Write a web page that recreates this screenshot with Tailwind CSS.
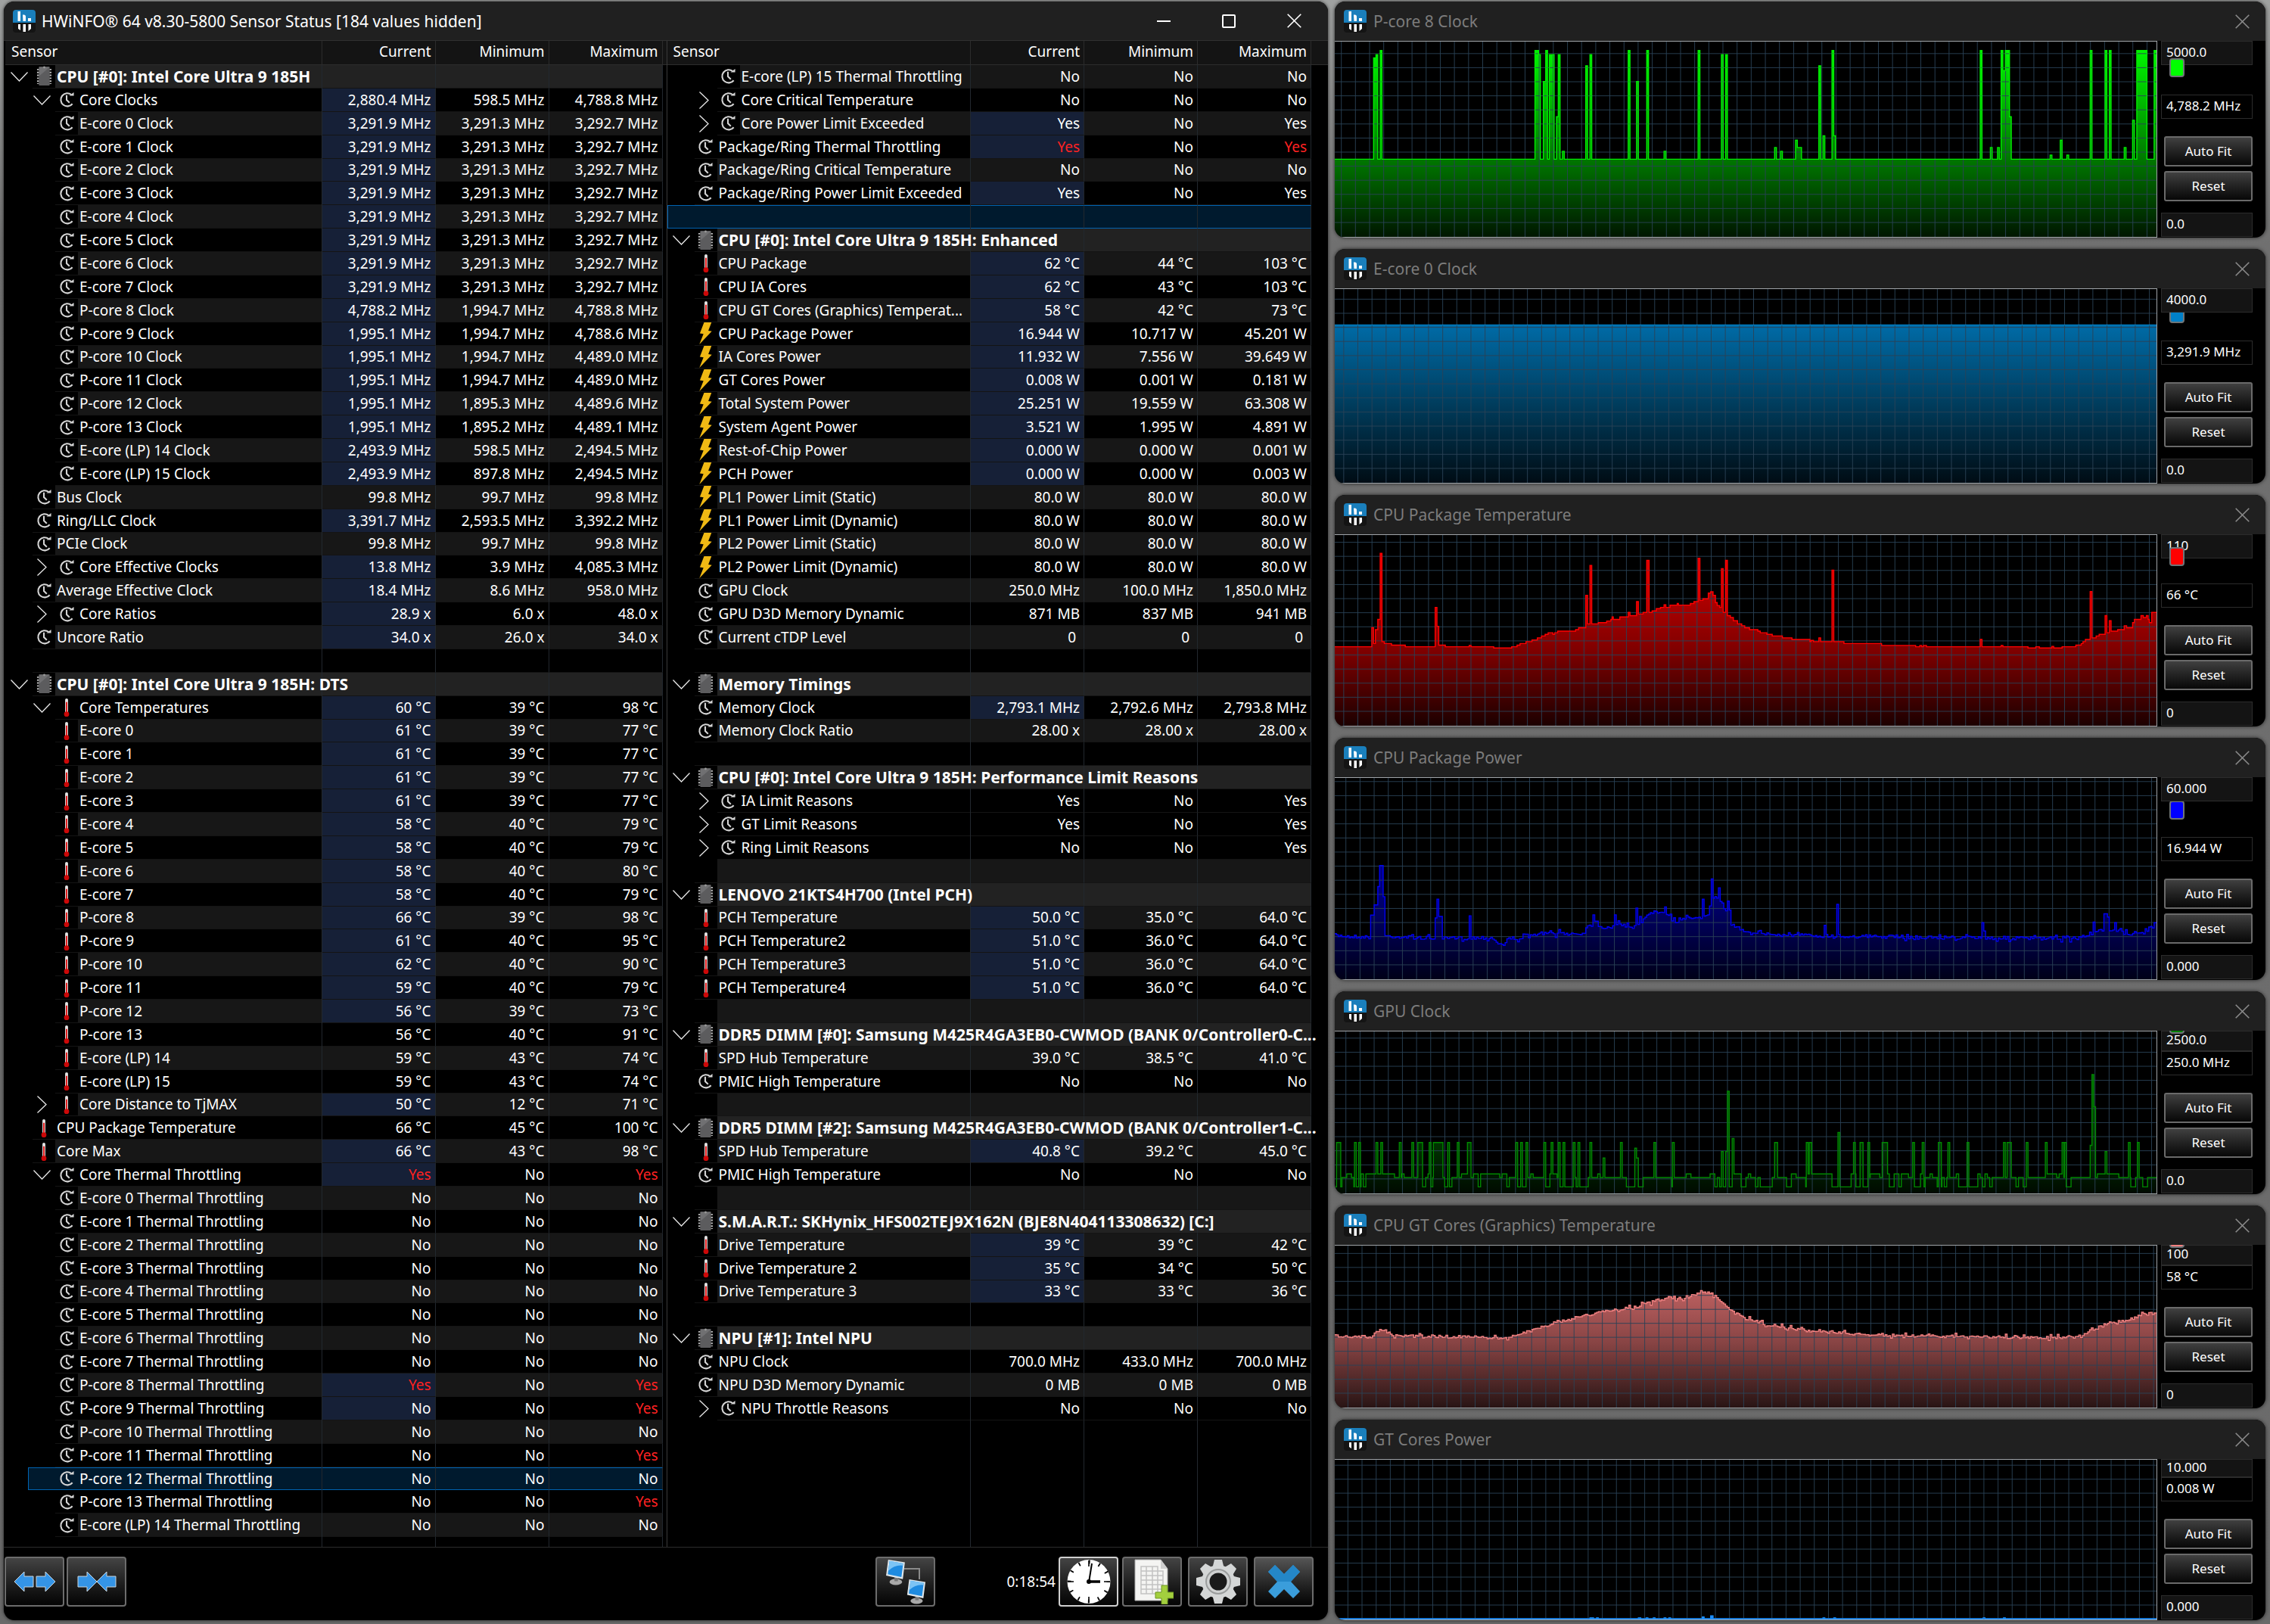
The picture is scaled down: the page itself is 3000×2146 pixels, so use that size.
<!DOCTYPE html>
<html lang="en">
<head>
<meta charset="utf-8">
<title>HWiNFO64 Sensor Status</title>
<script src="https://cdn.jsdelivr.net/npm/@tailwindcss/browser@4"></script>
</head>
<body class="h-screen bg-[linear-gradient(#a0a2a1,#707070_15%,#6a6a6a)] font-['Noto_Sans',sans-serif] text-white">
<!-- shared icons -->
<svg class="hidden" aria-hidden="true">
  <symbol id="app" viewBox="0 0 30 30">
    <rect width="30" height="30" rx="4" fill="#141414"/>
    <path d="M4 0h22a4 4 0 0 1 4 4v13H0V4a4 4 0 0 1 4-4z" fill="#1a7fbc"/>
    <path d="M6.500 2h3.500v13h-3.500zM13 6.500h1.500q2.500 0 2.500 2.500v6h-3.500zM20 11h4v4h-4zM7 19h3v8l-3-2zM13.500 19h3.500v10h-3.500zM20.500 19h3.500v6l-3.500 3z" fill="#fff"/>
  </symbol>
  <symbol id="clock" viewBox="0 0 22 22">
    <path d="M17 4.200A9 9 0 1 0 18.500 17" fill="none" stroke="#d4d4d4" stroke-width="2.200"/>
    <path d="M14 5.800h6.500V1z" fill="#d4d4d4"/>
    <path d="M10.500 5v6.500l4 4" fill="none" stroke="#d4d4d4" stroke-width="2.200"/>
  </symbol>
  <symbol id="chip" viewBox="0 0 22 28">
    <path d="M2.500 4v21M19.500 4v21" stroke="#b8b8b8" stroke-width="3" stroke-dasharray="2 2"/>
    <rect x="3.500" y="1" width="15" height="26" rx="1" fill="#5c5c5e"/>
    <path d="M4 14V2h14z" fill="#707072"/>
    <circle cx="11" cy="2" r="1.500" fill="#999"/>
  </symbol>
  <symbol id="temp" viewBox="0 0 10 28">
    <rect x="3" y="2" width="4" height="22" rx="2" fill="#e4e4e4"/>
    <rect x="4" y="7" width="2" height="17" fill="#e01818"/>
    <circle cx="5" cy="23.500" r="3.500" fill="#cc0808"/>
  </symbol>
  <symbol id="bolt" viewBox="0 0 17 30" preserveAspectRatio="none">
    <path d="M6.500 0h9.800l-4.200 11.500 4.600.7L.3 30l5.400-14.200-4.800-.8z" fill="#f0b914"/>
  </symbol>
  <symbol id="down" viewBox="0 0 23 13"><path d="M.5.500l11 11.500 11-11.500" fill="none" stroke="#e8e8e8" stroke-width="1.300"/></symbol>
  <symbol id="right" viewBox="0 0 13 23"><path d="M.5.500l11.500 11-11.500 11" fill="none" stroke="#e8e8e8" stroke-width="1.300"/></symbol>
  <symbol id="close" viewBox="0 0 19 19"><path d="M.7.700l17.600 17.600M18.300.700L.7 18.300" fill="none" stroke="currentColor" stroke-width="1.600"/></symbol>
  <symbol id="monitor" viewBox="0 0 28 38">
    <ellipse cx="15" cy="33" rx="9" ry="4.500" fill="#a9a9a9"/><path d="M13 26h5v6h-5z" fill="#777"/>
    <path d="M4 1l24 4-3 24L1 24z" fill="#dfe6ea"/><path d="M6 3l19.500 3.500-2.500 19.500L3.500 22z" fill="#1f8be0"/>
    <path d="M6 3l19.500 3.500-.4 3Q14 8 4 17z" fill="#7cc4f5"/>
  </symbol>
</svg>

<div class="grid h-full grid-cols-[1750fr_1230fr] gap-[9px] pt-[2px] pr-[6px] pb-[5px] pl-[5px]">
  <main class="flex min-w-0 flex-col overflow-hidden rounded-[14px] bg-black shadow-[0_0_4px_#222]">
    <header class="flex h-[52px] shrink-0 items-center border-b border-[#303030] bg-[#202020] pr-[2px]">
      <svg class="ml-[12px] size-[30px]"><use href="#app"/></svg>
      <h1 class="ml-[8px] flex-1 text-[21px] leading-[28px]">HWiNFO® 64 v8.30-5800 Sensor Status [184 values hidden]</h1>
      <button aria-label="Minimize" class="grid h-full w-[86px] place-items-center"><span class="h-[2px] w-[18px] bg-white"></span></button>
      <button aria-label="Maximize" class="grid h-full w-[86px] place-items-center"><span class="size-[18px] rounded-[2px] border-2 border-white"></span></button>
      <button aria-label="Close" class="grid h-full w-[86px] place-items-center"><svg class="size-[19px]"><use href="#close"/></svg></button>
    </header>
    <div class="flex min-h-0 flex-1 border-b border-[#2c2c2c]">
      <div class="min-w-0 flex-1 pl-[2px]"><table id="left" class="h-full w-full table-fixed border-separate border-spacing-0 text-[19px] leading-[28px]"></table></div>
      <div class="min-w-0 flex-1 border-l border-[#3a3a3a]"><table id="rightTable" class="h-full w-full table-fixed border-separate border-spacing-0 text-[19px] leading-[28px]"></table></div>
    </div>
    <footer class="flex h-[96px] shrink-0 items-start pt-[12px] pr-[19px] pl-px">
      <button aria-label="Expand columns" class="mr-[3px] grid h-[66px] w-[79px] place-items-center rounded-[4px] border-2 border-[#6c6c6c] bg-linear-to-b from-[#444] to-[#050505]">
        <svg class="h-[30px] w-[56px]" viewBox="0 0 56 30"><path d="M1 15L14 2v6h12v14H14v6zM55 15L42 2v6H30v14h12v6z" fill="#3494e6" stroke="#c8d4dc"/></svg>
      </button>
      <button aria-label="Shrink columns" class="grid h-[66px] w-[79px] place-items-center rounded-[4px] border-2 border-[#6c6c6c] bg-linear-to-b from-[#444] to-[#050505]">
        <svg class="h-[30px] w-[52px]" viewBox="0 0 52 30"><path d="M26 15L13 2v6H1v14h12v6zM26 15L39 2v6h12v14H39v6z" fill="#3494e6" stroke="#c8d4dc"/></svg>
      </button>
      <span class="flex-1"></span>
      <button aria-label="Remote monitoring" class="mr-[94px] grid h-[66px] w-[79px] place-items-center rounded-[4px] border-2 border-[#6c6c6c] bg-linear-to-b from-[#444] to-[#050505]">
        <svg class="h-[60px] w-[64px]" viewBox="0 0 64 60"><path d="M30 13h20v14" fill="none" stroke="#8a8a8a" stroke-width="2"/><use href="#monitor" x="3" y="0" width="30" height="35"/><use href="#monitor" x="31" y="26" width="29" height="34"/></svg>
      </button>
      <span class="flex h-[66px] items-center pr-[4px] text-[19px] leading-[28px]">0:18:54</span>
      <button aria-label="Reset timer" class="mr-[5px] grid h-[66px] w-[79px] place-items-center rounded-[4px] border-2 border-[#d0d0d0] bg-linear-to-b from-[#444] to-[#050505]">
        <svg class="h-[60px] w-[60px]" viewBox="0 0 60 60"><ellipse cx="30" cy="30" rx="28.500" ry="29" fill="#fff"/><circle cx="30" cy="30" r="26" fill="none" stroke="#000" stroke-width="5" stroke-dasharray="1.800 11.814" stroke-dashoffset=".9"/><path d="M30 2v8M30 50v8M2 30h8M50 30h8" stroke="#000" stroke-width="1.600"/><path d="M30 30h15" stroke="#000" stroke-width="3.500"/><path d="M30 31l4-25" stroke="#000" stroke-width="2"/><circle cx="30" cy="30" r="3"/></svg>
      </button>
      <button aria-label="Log to file" class="mr-[8px] grid h-[66px] w-[79px] place-items-center rounded-[4px] border-2 border-[#6c6c6c] bg-linear-to-b from-[#444] to-[#050505]">
        <svg class="h-[60px] w-[56px]" viewBox="0 0 56 60"><path d="M5 1h34l9 12v42H5z" fill="#f4f4f2" stroke="#aaa"/><path d="M39 1v12h9z" fill="#cfcfcf"/><path d="M13 10h22v6h7v30H13zM13 16h29M13 22h29M13 28h29M13 34h29M13 40h29M20 10v36M28 10v36M35 16v30" fill="none" stroke="#c2c2c2" stroke-width="1.500"/><path d="M40 35h8v9h8v8h-8v8h-8v-8h-8v-8h8z" fill="#a3cf3e" stroke="#6f9620"/></svg>
      </button>
      <button aria-label="Settings" class="mr-[8px] grid h-[66px] w-[79px] place-items-center rounded-[4px] border-2 border-[#6c6c6c] bg-linear-to-b from-[#444] to-[#050505]">
        <svg class="size-[60px]" viewBox="-30 -30 60 60"><g fill="#d4d6d6"><path id="tooth" d="M-5 -29h10l3 12h-16zM-5 29h10l3-12h-16zM-29 -5v10l12 3v-16zM29 -5v10l-12 3v-16z"/><use href="#tooth" transform="rotate(45)"/></g><circle r="22" fill="#d4d6d6"/><circle r="17" fill="#9a9c9c"/><circle r="15" fill="#cfd1d1"/><circle r="11.500" fill="#1a1a1a"/></svg>
      </button>
      <button aria-label="Close sensors" class="grid h-[66px] w-[79px] place-items-center rounded-[4px] border-2 border-[#6c6c6c] bg-linear-to-b from-[#555] to-[#050505]">
        <svg class="size-[44px]" viewBox="0 0 44 44"><path d="M10 0l12 12L34 0l9 9-12 13 12 13-9 9-12-12-12 12-9-9 12-13L1 9z" fill="#3a9ddb"/><path d="M10 0l12 12L34 0l9 9-12 13H13L1 9z" fill="#2487c8"/></svg>
      </button>
    </footer>
  </main>
  <div id="graphs" class="flex min-w-0 flex-col gap-[15px]"></div>
</div>

<script>
// Row: [tree depth, chevron, icon, name, current, minimum, maximum, current changed]
const R = 'r', D = 'd';
const cores = [...Array(8).keys()].map(i => 'E-core ' + i).concat([8,9,10,11,12,13].map(i => 'P-core ' + i), ['E-core (LP) 14', 'E-core (LP) 15']);
const E = ['3,291.9','3,291.3','3,292.7'];
const clocks = [E,E,E,E,E,E,E,E,['4,788.2','1,994.7','4,788.8'],['1,995.1','1,994.7','4,788.6'],['1,995.1','1,994.7','4,489.0'],['1,995.1','1,994.7','4,489.0'],['1,995.1','1,895.3','4,489.6'],['1,995.1','1,895.2','4,489.1'],['2,493.9','598.5','2,494.5'],['2,493.9','897.8','2,494.5']];
const temps = [[61,39,77],[61,39,77],[61,39,77],[61,39,77],[58,40,79],[58,40,79],[58,40,80],[58,40,79],[66,39,98],[61,40,95],[62,40,90],[59,40,79],[56,39,73],[56,40,91],[59,43,74],[59,43,74]];
const left = [
  ['H', 'CPU [#0]: Intel Core Ultra 9 185H'],
  [1,D,'clock','Core Clocks','2,880.4 MHz','598.5 MHz','4,788.8 MHz',1],
  ...cores.map((c, i) => [1,'','clock', c + ' Clock', ...clocks[i].map(v => v + ' MHz'), 1]),
  [0,'','clock','Bus Clock','99.8 MHz','99.7 MHz','99.8 MHz',0],
  [0,'','clock','Ring/LLC Clock','3,391.7 MHz','2,593.5 MHz','3,392.2 MHz',1],
  [0,'','clock','PCIe Clock','99.8 MHz','99.7 MHz','99.8 MHz',0],
  [1,R,'clock','Core Effective Clocks','13.8 MHz','3.9 MHz','4,085.3 MHz',1],
  [0,'','clock','Average Effective Clock','18.4 MHz','8.6 MHz','958.0 MHz',1],
  [1,R,'clock','Core Ratios','28.9 x','6.0 x','48.0 x',1],
  [0,'','clock','Uncore Ratio','34.0 x','26.0 x','34.0 x',1],
  ['B'],
  ['H', 'CPU [#0]: Intel Core Ultra 9 185H: DTS'],
  [1,D,'temp','Core Temperatures','60 °C','39 °C','98 °C',1],
  ...cores.map((c, i) => [1,'','temp', c, ...temps[i].map(v => v + ' °C'), i < 13]),
  [1,R,'temp','Core Distance to TjMAX','50 °C','12 °C','71 °C',1],
  [0,'','temp','CPU Package Temperature','66 °C','45 °C','100 °C',0],
  [0,'','temp','Core Max','66 °C','43 °C','98 °C',1],
  [1,D,'clock','Core Thermal Throttling','!Yes','No','!Yes',1],
  ...cores.slice(0, 15).map((c, i) => [1,'','clock', c + ' Thermal Throttling', i == 8 ? '!Yes' : 'No', 'No', [8,9,11,13].includes(i) ? '!Yes' : 'No', i == 8 || i == 9, i == 12 ? 'sel' : ''])
];
const right = [
  [1,'','clock','E-core (LP) 15 Thermal Throttling','No','No','No',0],
  [1,R,'clock','Core Critical Temperature','No','No','No',0],
  [1,R,'clock','Core Power Limit Exceeded','Yes','No','Yes',1],
  [0,'','clock','Package/Ring Thermal Throttling','!Yes','No','!Yes',1],
  [0,'','clock','Package/Ring Critical Temperature','No','No','No',0],
  [0,'','clock','Package/Ring Power Limit Exceeded','Yes','No','Yes',1],
  ['B','sel'],
  ['H','CPU [#0]: Intel Core Ultra 9 185H: Enhanced'],
  [0,'','temp','CPU Package','62 °C','44 °C','103 °C',1],
  [0,'','temp','CPU IA Cores','62 °C','43 °C','103 °C',1],
  [0,'','temp','CPU GT Cores (Graphics) Temperat...','58 °C','42 °C','73 °C',1],
  [0,'','bolt','CPU Package Power','16.944 W','10.717 W','45.201 W',1],
  [0,'','bolt','IA Cores Power','11.932 W','7.556 W','39.649 W',1],
  [0,'','bolt','GT Cores Power','0.008 W','0.001 W','0.181 W',1],
  [0,'','bolt','Total System Power','25.251 W','19.559 W','63.308 W',1],
  [0,'','bolt','System Agent Power','3.521 W','1.995 W','4.891 W',1],
  [0,'','bolt','Rest-of-Chip Power','0.000 W','0.000 W','0.001 W',1],
  [0,'','bolt','PCH Power','0.000 W','0.000 W','0.003 W',1],
  [0,'','bolt','PL1 Power Limit (Static)','80.0 W','80.0 W','80.0 W',0],
  [0,'','bolt','PL1 Power Limit (Dynamic)','80.0 W','80.0 W','80.0 W',0],
  [0,'','bolt','PL2 Power Limit (Static)','80.0 W','80.0 W','80.0 W',0],
  [0,'','bolt','PL2 Power Limit (Dynamic)','80.0 W','80.0 W','80.0 W',0],
  [0,'','clock','GPU Clock','250.0 MHz','100.0 MHz','1,850.0 MHz',0],
  [0,'','clock','GPU D3D Memory Dynamic','871 MB','837 MB','941 MB',0],
  [0,'','clock','Current cTDP Level','0&nbsp;','0&nbsp;','0&nbsp;',0],
  ['B'],
  ['H','Memory Timings'],
  [0,'','clock','Memory Clock','2,793.1 MHz','2,792.6 MHz','2,793.8 MHz',1],
  [0,'','clock','Memory Clock Ratio','28.00 x','28.00 x','28.00 x',0],
  ['B'],
  ['H','CPU [#0]: Intel Core Ultra 9 185H: Performance Limit Reasons'],
  [1,R,'clock','IA Limit Reasons','Yes','No','Yes',0],
  [1,R,'clock','GT Limit Reasons','Yes','No','Yes',0,'black'],
  [1,R,'clock','Ring Limit Reasons','No','No','Yes',0],
  ['B'],
  ['H','LENOVO 21KTS4H700 (Intel PCH)'],
  [0,'','temp','PCH Temperature','50.0 °C','35.0 °C','64.0 °C',1],
  [0,'','temp','PCH Temperature2','51.0 °C','36.0 °C','64.0 °C',1],
  [0,'','temp','PCH Temperature3','51.0 °C','36.0 °C','64.0 °C',1],
  [0,'','temp','PCH Temperature4','51.0 °C','36.0 °C','64.0 °C',1],
  ['B'],
  ['H','DDR5 DIMM [#0]: Samsung M425R4GA3EB0-CWMOD (BANK 0/Controller0-C...'],
  [0,'','temp','SPD Hub Temperature','39.0 °C','38.5 °C','41.0 °C',0],
  [0,'','clock','PMIC High Temperature','No','No','No',0],
  ['B'],
  ['H','DDR5 DIMM [#2]: Samsung M425R4GA3EB0-CWMOD (BANK 0/Controller1-C...'],
  [0,'','temp','SPD Hub Temperature','40.8 °C','39.2 °C','45.0 °C',1],
  [0,'','clock','PMIC High Temperature','No','No','No',0],
  ['B'],
  ['H','S.M.A.R.T.: SKHynix_HFS002TEJ9X162N (BJE8N404113308632) [C:]'],
  [0,'','temp','Drive Temperature','39 °C','39 °C','42 °C',1],
  [0,'','temp','Drive Temperature 2','35 °C','34 °C','50 °C',1],
  [0,'','temp','Drive Temperature 3','33 °C','33 °C','36 °C',1],
  ['B'],
  ['H','NPU [#1]: Intel NPU'],
  [0,'','clock','NPU Clock','700.0 MHz','433.0 MHz','700.0 MHz',0],
  [0,'','clock','NPU D3D Memory Dynamic','0 MB','0 MB','0 MB',0],
  [1,R,'clock','NPU Throttle Reasons','No','No','No',0],
  ['X'],['X'],['X'],['X'],['X']
];
const icons = {
  clock: '<svg class="size-[21px]"><use href="#clock"/></svg>',
  chip: '<svg class="h-[27px] w-[21px]"><use href="#chip"/></svg>',
  temp: '<svg class="h-[27px] w-[10px]"><use href="#temp"/></svg>',
  bolt: '<svg class="h-[29px] w-[17px]"><use href="#bolt"/></svg>'
};
const chev = {
  d: '<svg class="mr-[6px] h-[13px] w-[23px]"><use href="#down"/></svg>',
  r: '<svg class="mr-[11px] h-[23px] w-[13px]"><use href="#right"/></svg>',
  '': ''
};
function rowHtml(r, i) {
  const kind = r[0], head = kind === 'H', plain = kind === 'B' || kind === 'X';
  const sel = r[8] === 'sel' || r[1] === 'sel';
  const even = i % 2 === 0 && kind !== 'X' && r[8] !== 'black';
  const bg = sel ? 'bg-[#001a2e]' : head ? 'bg-[#222222]' : even ? 'bg-[#171717]' : 'bg-black';
  const line = sel ? 'border-y border-y-[#0063b1]' : kind === 'X' ? '' : 'border-b border-b-[#141414]';
  const name = head ? r[1] : plain ? '' : r[3];
  const ind = kind === 1 ? 'w-[66px]' : 'w-[36px]';
  const ch = head ? chev.d : plain ? '' : chev[r[1]];
  let first;
  if (plain && sel) first = `<div class="h-full border border-r-0 border-[#0063b1] ${bg}"></div>`;
  else if (sel) first = `<div class="ml-[30px] flex h-full items-center border border-r-0 border-[#0063b1] ${bg}"><span class="w-[35px]"></span><span class="flex w-[30px] justify-center">${icons.clock}</span><span class="pl-[2px] whitespace-nowrap">${name}</span></div>`;
  else first = `<div class="flex h-full"><span class="flex shrink-0 items-center justify-end ${ind}">${ch}</span><div class="flex min-w-0 flex-1 ${line}"><span class="flex w-[30px] shrink-0 items-center justify-center">${head ? icons.chip : plain ? '' : icons[r[2]]}</span><span class="flex min-w-0 flex-1 items-center pl-[2px] whitespace-nowrap ${bg} ${head ? 'text-[21px] leading-[28px] font-bold' : ''}">${name}</span></div></div>`;
  const vals = head || plain ? ['', '', ''] : [r[4], r[5], r[6]];
  const cells = vals.map((v, k) => {
    const red = v[0] === '!';
    const cbg = k === 0 && r[7] && !sel && !head && !plain ? 'bg-[#162037]' : bg;
    return `<td class="border-r border-r-[#22282e] pr-[5px] text-right whitespace-nowrap ${line} ${cbg} ${red ? 'text-[#ff2222]' : ''}">${red ? v.slice(1) : v}</td>`;
  }).join('');
  return `<tr class="h-[30px]"><td class="h-[30px] border-r border-r-[#22282e] p-0">${first}</td>${cells}<td></td></tr>`;
}
function fill(id, rows, tail) {
  const th = 'border-r border-b border-[#2c2c2c] bg-[#141414] pr-[5px] pb-[3px] text-right font-normal';
  document.getElementById(id).innerHTML =
    `<colgroup><col><col class="w-[150px]"><col class="w-[150px]"><col class="w-[150px]"><col class="${tail}"></colgroup>
    <thead><tr class="h-[32px]"><th scope="col" class="border-r border-b border-[#2c2c2c] bg-[#141414] pb-[3px] pl-[8px] text-left font-normal">Sensor</th><th scope="col" class="${th}">Current</th><th scope="col" class="${th}">Minimum</th><th scope="col" class="${th}">Maximum</th><td class="border-b border-[#2c2c2c] bg-[#141414]"></td></tr></thead>
    <tbody>${rows.map(rowHtml).join('')}<tr class="h-[12px]">${'<td class="border-r border-r-[#22282e]"></td>'.repeat(4)}<td></td></tr></tbody>`;
}
fill('left', left, 'w-[5px]');
fill('rightTable', right, 'w-[22px]');

// Graph history: each series is a list of [x, y] steps in its own plot units.
let seed = 7;
const rnd = () => (seed = (seed * 16807) % 2147483647) / 2147483647;
const spikes = (base, list) => { const o = [[5, base]]; list.forEach(([x, y, w = 3], i) => { o.push([x, y]); const n = list[i + 1]; if (!n || n[0] > x + w) o.push([x + w, base]); }); return o; };
function wander(anchors, amp, peaks, step = 3) {
  const o = [];
  for (let x = 5; x < 1379; x += step) {
    let k = 0; while (k < anchors.length - 2 && anchors[k + 1][0] <= x) k++;
    const [a, b] = [anchors[k], anchors[k + 1]];
    let y = a[1] + (b[1] - a[1]) * (x - a[0]) / (b[0] - a[0]) + (rnd() * 2 - 1) * (rnd() < .2 ? amp * 1.6 : amp * .7);
    const p = peaks.find(p => x >= p[0] && x < p[0] + (p[2] || 3));
    o.push([x, p ? p[1] : y]);
  }
  return o;
}
const green = spikes(500, [[70,180,4],[74,170],[81,157],[340,157,6],[346,170],[354,255,4],[358,157],[364,170,8],[376,366],[379,170],[386,475],[425,205],[432,170],[496,157],[510,255],[527,157],[556,475],[613,157],[652,170],[659,170],[741,463],[751,475],[776,440],[779,463,7],[815,205],[822,426],[837,157],[840,426],[1085,157],[1102,463],[1114,463],[1120,157],[1123,220,4],[1127,157,7],[1134,366],[1202,487],[1219,440],[1230,487],[1269,157],[1294,157],[1301,157],[1326,463],[1340,377],[1347,157,17],[1376,157,6]]);
const red = [[5,484],[67,424],[70,474],[73,430],[77,398],[81,190],[84,468],[88,474],[100,479],[123,484],[173,360],[176,420],[179,479],[190,484],[230,480],[233,484],[271,488],[301,484],[310,479],[315,474],[325,468],[335,463],[344,456],[351,450],[357,445],[362,440],[370,445],[373,440],[378,435],[408,430],[413,424],[425,322],[428,412],[432,228],[435,412],[446,408],[460,403],[467,398],[469,390],[471,398],[482,390],[496,376],[499,386],[510,342],[513,381],[521,376],[527,212],[531,376],[536,371],[543,364],[550,360],[556,352],[559,360],[566,353],[578,348],[580,353],[600,348],[606,342],[613,205],[616,338],[621,333],[630,315],[634,311],[638,322],[642,345],[645,354],[649,360],[652,238],[655,376],[659,212],[662,386],[667,392],[672,402],[679,412],[686,418],[691,424],[699,430],[713,435],[717,440],[728,445],[737,450],[754,456],[770,461],[800,468],[802,464],[806,468],[815,456],[818,468],[837,243],[840,468],[857,474],[920,480],[977,484],[984,480],[987,484],[990,480],[995,484],[1085,461],[1088,484],[1120,480],[1123,484],[1165,488],[1178,484],[1184,488],[1205,483],[1208,488],[1222,484],[1245,479],[1254,474],[1257,468],[1261,461],[1269,310],[1272,456],[1279,450],[1284,445],[1294,386],[1297,440],[1301,402],[1304,435],[1315,430],[1326,418],[1330,424],[1340,408],[1343,398],[1354,386],[1358,392],[1363,386],[1366,398],[1368,408],[1372,376]];
const power = wander([[5,1390],[66,1396],[88,1392],[180,1400],[268,1396],[276,1415],[290,1415],[294,1400],[332,1396],[342,1384],[420,1384],[430,1355],[445,1360],[460,1366],[480,1356],[505,1362],[520,1345],[535,1310],[560,1315],[575,1345],[600,1335],[630,1325],[636,1275],[650,1280],[660,1310],[668,1355],[690,1375],[740,1388],[850,1392],[1000,1396],[1200,1400],[1250,1398],[1275,1380],[1310,1370],[1325,1385],[1350,1382],[1379,1360]], 8,
  [[65,1326,4],[69,1294,7],[76,1236,4],[80,1170,4],[84,1268,4],[172,1335,3],[175,1276,4],[179,1330,4],[230,1328],[435,1325],[439,1345,5],[471,1325],[509,1304],[514,1330,4],[555,1300],[620,1276],[634,1212],[645,1240],[661,1282],[664,1310,4],[822,1358],[843,1292,4],[1087,1350],[1090,1376,4],[1274,1348],[1290,1322,6],[1298,1332,3],[1308,1350],[1376,1350,4]]);
const gpuSpikes = [[8,7],[38],[45],[74],[82],[113],[134],[144,8],[163],[170,16],[194],[210],[227,6],[308],[316],[325],[355],[367],[379],[387],[404],[412],[432],[483],[539],[570],[741,5],[794],[799,4],[873],[884,5],[897],[921,9],[972],[988],[1015,5],[1031],[1063],[1124],[1130,7],[1162],[1194],[1222],[1226],[1333],[1348]].map(([x, w = 3]) => [x, 386, w])
  .concat([[454,424],[507,400],[510,424],[652,408],[659,408],[662,260],[670,376],[847,361],[1269,393],[1272,219],[1275,298],[1294,408]]);
let lvl = 472;
const gpu = wander([[5,472],[1379,472]], 0, gpuSpikes, 1).filter((p, i, a) => !i || p[1] !== a[i - 1][1] || i % 4 === 0).map(p => {
  if (p[1] !== 472) return p;
  if (rnd() < .45) { const q = rnd(); lvl = q < .5 ? 472 : q < .75 ? 463 : 495; }
  return [p[0], lvl];
});
const salmon = wander([[5,860],[65,862],[72,850],[82,842],[95,852],[108,859],[290,864],[310,859],[340,842],[380,825],[420,810],[460,797],[500,790],[530,778],[560,765],[590,765],[615,752],[635,755],[650,772],[665,795],[690,815],[720,828],[760,840],[800,847],[860,853],[920,858],[1000,860],[1160,863],[1245,864],[1270,846],[1300,828],[1330,820],[1360,806],[1379,803]], 5, []);
const gt = spikes(1555, [[432,1553,6],[443,1553],[513,1553,4],[526,1553],[538,1553],[556,1553],[564,1553],[620,1551],[634,1548,4],[822,1553],[840,1553],[1090,1553],[1124,1553]]);

const panels = [
  { t: 'P-core 8 Clock', c: 'flex-[312_1_0px]', max: '5000.0', cur: '4,788.2 MHz', min: '0.0', sw: 'z-10 bg-[#00ff00]', s: '#00ee00', g: ['#00ff00', '#007800', '#001600'], y0: 129, y1: 745, px: 16, py: 44.4, d: green },
  { t: 'E-core 0 Clock', c: 'flex-[310_1_0px]', max: '4000.0', cur: '3,291.9 MHz', min: '0.0', sw: 'bg-[#0080c8]', s: '#0080c8', g: ['#0080c8', '#003c5c', '#000c14'], y0: 906, y1: 1516, px: 20, py: 44.4, d: [[5, 1019]] },
  { t: 'CPU Package Temperature', c: 'flex-[306_1_0px]', max: '110', cur: '66 °C', min: '0', sw: 'z-10 bg-[#ff0000]', s: '#ff0000', g: ['#e80000', '#800000', '#1c0000'], y0: 132, y1: 733, px: 20, py: 44.4, d: red },
  { t: 'CPU Package Power', c: 'flex-[320_1_0px]', max: '60.000', cur: '16.944 W', min: '0.000', sw: 'bg-[#0000ff]', s: '#0000f0', g: ['#0000d8', '#000070', '#000018'], y0: 894, y1: 1528, px: 23.600, py: 44.4, d: power },
  { t: 'GPU Clock', c: 'flex-[268_1_0px]', max: '2500.0', cur: '250.0 MHz', min: '0.0', sw: 'z-10 bg-[#008000]', s: '#008800', g: ['#007000', '#004000', '#000a00'], y0: 113, y1: 511, px: 23.600, py: 34.6, d: gpu },
  { t: 'CPU GT Cores (Graphics) Temperature', c: 'flex-[268_1_0px]', max: '100', cur: '58 °C', min: '0', sw: 'z-10 bg-[#ff8080]', s: '#f08080', g: ['#e87878', '#884444', '#281414'], y0: 636, y1: 1037, px: 27, py: 34.6, d: salmon },
  { t: 'GT Cores Power', c: 'flex-[265_1_0px]', max: '10.000', cur: '0.008 W', min: '0.000', sw: 'bg-[#444444]', s: '#1e90ff', g: ['#1e90ff', '#104880', '#1e90ff'], y0: 1162, y1: 1557, px: 27, py: 34.6, d: gt }
];
const box = 'block w-full border border-[#2c2c2c] px-[6px] pb-[4px] text-[17px] leading-[26px] text-white';
const btn = 'ml-[4px] h-[40px] shrink-0 rounded-[3px] border-2 border-[#6a6a6a] bg-linear-to-b from-[#404040] to-[#080808] text-[17px] leading-[24px]';
document.getElementById('graphs').innerHTML = panels.map((p, n) => {
  let area = `M5 ${p.y1 + 9}`, line = '', grid = '';
  p.d.forEach(([x, y], i) => { const f = y.toFixed(1); line += i ? `H${x}V${f}` : `M${x} ${f}`; area += `${i ? 'H' + x : 'L' + x + ' ' + f}V${f}`; });
  line += 'H1380'; area += `H1380V${p.y1 + 9}Z`;
  for (let x = p.px; x < 1380; x += 23.65) grid += `M${x.toFixed(1)} ${p.y0}V${p.y1}`;
  for (let y = p.y1 - 1 - p.py; y > p.y0; y -= p.py) grid += `M5 ${y.toFixed(1)}H1380`;
  return `<section aria-label="${p.t}" class="flex min-h-0 flex-col overflow-hidden rounded-[14px] bg-black shadow-[0_0_5px_#222] ${p.c}">
    <header class="flex h-[52px] shrink-0 items-center bg-[#202020] pl-[12px] pr-[21px]">
      <svg class="size-[30px]"><use href="#app"/></svg>
      <h2 class="ml-[9px] flex-1 text-[21px] leading-[28px] text-[#7c7c7c]">${p.t}</h2>
      <button aria-label="Close" class="text-[#8a8a8a]"><svg class="size-[19px]"><use href="#close"/></svg></button>
    </header>
    <div class="flex min-h-0 flex-1">
      <svg class="h-full min-w-0 flex-1 border-y border-r border-[#a0a4a8]" viewBox="5 ${p.y0} 1375 ${p.y1 - p.y0}" preserveAspectRatio="none">
        <defs><linearGradient id="g${n}" gradientUnits="userSpaceOnUse" x1="0" x2="0" y1="${p.y0}" y2="${p.y1}"><stop offset="0" stop-color="${p.g[0]}"/><stop offset=".6" stop-color="${p.g[1]}"/><stop offset="1" stop-color="${p.g[2]}"/></linearGradient></defs>
        <path d="${area}" fill="url(#g${n})"/>
        <path d="${grid}" fill="none" stroke="#2a4256" stroke-opacity=".9" vector-effect="non-scaling-stroke"/>
        <path d="${line}" fill="none" stroke="${p.s}" stroke-width="1.400" vector-effect="non-scaling-stroke"/>
      </svg>
      <div class="relative flex w-[143px] shrink-0 flex-col overflow-hidden pr-[17px] pb-px pl-[5px]">
        <span class="absolute bottom-[212px] left-[16px] h-[25px] w-[20px] rounded-[4px] border-2 border-[#6f7478] ${p.sw}"></span>
        <input aria-label="${p.t} scale maximum" value="${p.max}" class="relative mb-auto h-[32px] min-h-0 shrink bg-[#141414] ${box}">
        <input aria-label="${p.t} current value" readonly value="${p.cur}" class="relative mb-[23px] h-[32px] shrink-0 bg-black ${box}">
        <button class="mb-[6px] ${btn}">Auto Fit</button>
        <button class="mb-[15px] ${btn}">Reset</button>
        <input aria-label="${p.t} scale minimum" value="${p.min}" class="h-[32px] shrink-0 bg-[#141414] ${box}">
      </div>
    </div>
  </section>`;
}).join('');
</script>
</body>
</html>
